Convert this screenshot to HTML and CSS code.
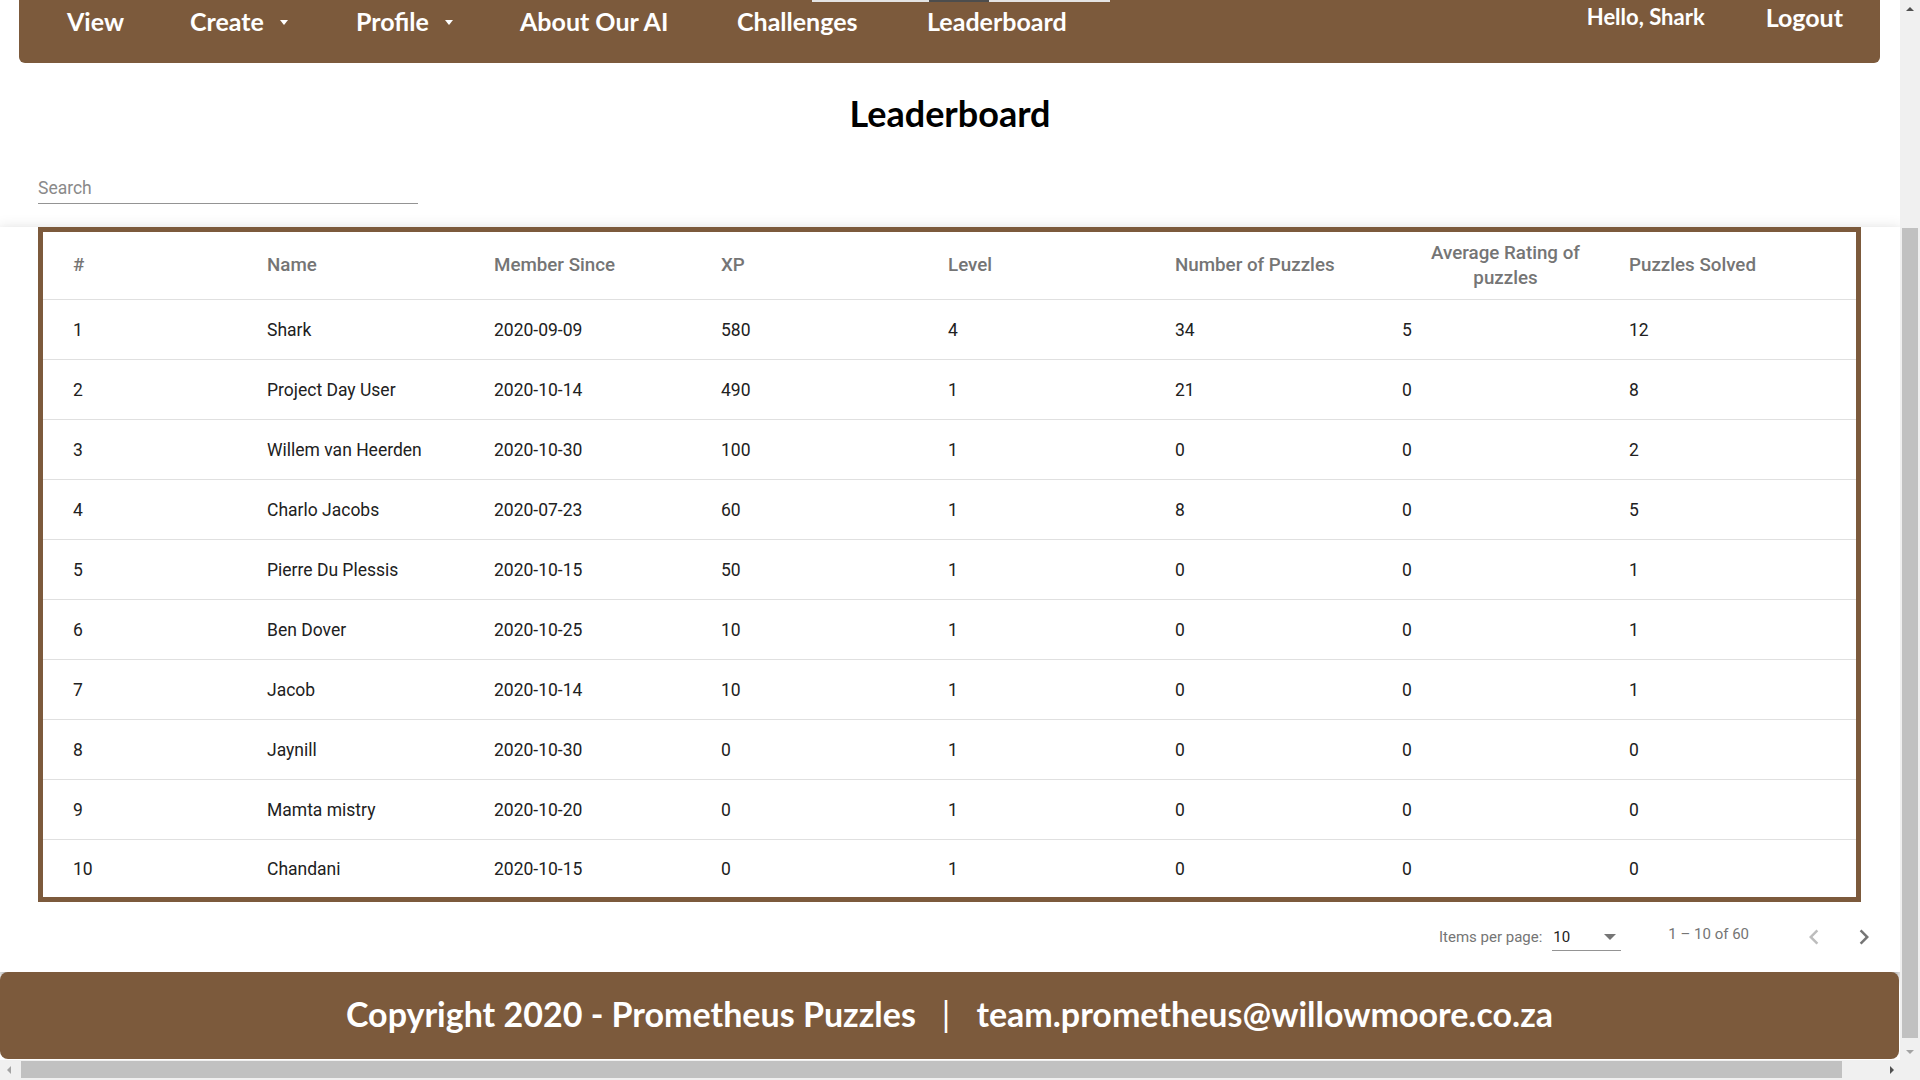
FILE: index.html
```html
<!DOCTYPE html>
<html lang="en">
<head>
<meta charset="utf-8">
<title>Leaderboard - Prometheus Puzzles</title>
<link rel="stylesheet" href="styles.css">
</head>
<body>
<div class="window">
  <div class="viewport">
    <header class="navbar">
      <div class="logo-edge"><span class="logo-dark"></span></div>
      <nav class="nav-left">
        <a class="nav-link w-view">View</a>
        <a class="nav-link w-create">Create<span class="caret"></span></a>
        <a class="nav-link w-profile">Profile<span class="caret"></span></a>
        <a class="nav-link w-about">About Our AI</a>
        <a class="nav-link w-challenges">Challenges</a>
        <a class="nav-link">Leaderboard</a>
      </nav>
      <div class="nav-right">
        <span class="hello">Hello, Shark</span>
        <a class="nav-link">Logout</a>
      </div>
    </header>

    <main class="content">
      <h1 class="page-title">Leaderboard</h1>
      <div class="search-field">
        <input type="text" placeholder="Search">
      </div>

      <section class="board">
        <div class="table-frame">
          <table class="lb-table">
            <colgroup>
              <col class="c-first"><col><col><col><col><col><col><col>
            </colgroup>
            <thead>
              <tr>
                <th>#</th>
                <th>Name</th>
                <th>Member Since</th>
                <th>XP</th>
                <th>Level</th>
                <th>Number of Puzzles</th>
                <th class="th-center">Average Rating of puzzles</th>
                <th>Puzzles Solved</th>
              </tr>
            </thead>
            <tbody>
              <tr><td>1</td><td>Shark</td><td>2020-09-09</td><td>580</td><td>4</td><td>34</td><td>5</td><td>12</td></tr>
              <tr><td>2</td><td>Project Day User</td><td>2020-10-14</td><td>490</td><td>1</td><td>21</td><td>0</td><td>8</td></tr>
              <tr><td>3</td><td>Willem van Heerden</td><td>2020-10-30</td><td>100</td><td>1</td><td>0</td><td>0</td><td>2</td></tr>
              <tr><td>4</td><td>Charlo Jacobs</td><td>2020-07-23</td><td>60</td><td>1</td><td>8</td><td>0</td><td>5</td></tr>
              <tr><td>5</td><td>Pierre Du Plessis</td><td>2020-10-15</td><td>50</td><td>1</td><td>0</td><td>0</td><td>1</td></tr>
              <tr><td>6</td><td>Ben Dover</td><td>2020-10-25</td><td>10</td><td>1</td><td>0</td><td>0</td><td>1</td></tr>
              <tr><td>7</td><td>Jacob</td><td>2020-10-14</td><td>10</td><td>1</td><td>0</td><td>0</td><td>1</td></tr>
              <tr><td>8</td><td>Jaynill</td><td>2020-10-30</td><td>0</td><td>1</td><td>0</td><td>0</td><td>0</td></tr>
              <tr><td>9</td><td>Mamta mistry</td><td>2020-10-20</td><td>0</td><td>1</td><td>0</td><td>0</td><td>0</td></tr>
              <tr><td>10</td><td>Chandani</td><td>2020-10-15</td><td>0</td><td>1</td><td>0</td><td>0</td><td>0</td></tr>
            </tbody>
          </table>
        </div>

        <div class="paginator">
          <span class="page-size-label">Items per page:</span>
          <div class="page-select"><span>10</span><span class="select-arrow"></span></div>
          <span class="range-label">1 – 10 of 60</span>
          <button class="page-btn prev" type="button" aria-label="Previous page">
            <svg viewBox="0 0 24 24"><path fill="currentColor" d="M15.41 7.41L14 6l-6 6 6 6 1.41-1.41L10.83 12z"/></svg>
          </button>
          <button class="page-btn next" type="button" aria-label="Next page">
            <svg viewBox="0 0 24 24"><path fill="currentColor" d="M10 6L8.59 7.41 13.17 12l-4.58 4.59L10 18l6-6z"/></svg>
          </button>
        </div>
      </section>
    </main>

    <footer class="site-footer">
      <span>Copyright 2020 - Prometheus Puzzles</span><span class="sep">|</span><span>team.prometheus@willowmoore.co.za</span>
    </footer>
  </div>

  <div class="vscroll">
    <div class="sb-btn"><span class="arr-up"></span></div>
    <div class="v-track"><div class="v-thumb"></div></div>
    <div class="sb-btn"><span class="arr-down"></span></div>
  </div>
  <div class="hscroll">
    <div class="sb-btn h"><span class="arr-left"></span></div>
    <div class="h-track"><div class="h-thumb"></div></div>
    <div class="sb-btn h"><span class="arr-right"></span></div>
  </div>
  <div class="corner"></div>
</div>
</body>
</html>
```

FILE: styles.css
```css
* { box-sizing: border-box; }
html, body { margin: 0; padding: 0; }
body {
  width: 1920px;
  height: 1080px;
  overflow: hidden;
  background: #fff;
  font-family: Roboto, "Liberation Sans", sans-serif;
}

.window {
  display: grid;
  grid-template-columns: 1900px 20px;
  grid-template-rows: 1060px 20px;
  width: 1920px;
  height: 1080px;
}

.viewport {
  overflow: hidden;
  background: #fff;
  display: flex;
  flex-direction: column;
}

/* ---------- navbar ---------- */
.navbar {
  position: relative;
  flex: none;
  height: 63px;
  margin: 0 20px 0 19px;
  background: #7c5a3c;
  border-radius: 0 0 6px 6px;
  display: flex;
  justify-content: space-between;
  align-items: flex-start;
  color: #fff;
  font-family: Lato, "Open Sans", sans-serif;
  font-weight: 700;
}
.logo-edge {
  position: absolute;
  top: 0;
  left: 793px;
  width: 298px;
  height: 2px;
  background: #e4e4e4;
}
.logo-dark {
  position: absolute;
  top: 0;
  left: 117px;
  width: 60px;
  height: 2px;
  background: #4d4d4d;
}
.nav-left {
  display: flex;
  align-items: flex-start;
  padding: 6px 0 0 48px;
}
.nav-link {
  font-size: 25px;
  line-height: 30px;
  height: 30px;
  color: #fff;
  text-decoration: none;
  display: flex;
  align-items: center;
  white-space: nowrap;
}
.w-view { width: 123px; }
.w-create { width: 166px; }
.w-profile { width: 164px; }
.w-about { width: 217px; }
.w-challenges { width: 190px; }
.caret {
  width: 0;
  height: 0;
  border-left: 4.5px solid transparent;
  border-right: 4.5px solid transparent;
  border-top: 5px solid #fff;
  margin: 2px 0 0 16px;
}
.nav-right {
  display: flex;
  align-items: center;
  gap: 61px;
  height: 32px;
  padding: 2px 37px 0 0;
}
.hello { font-size: 22px; line-height: 30px; }

/* ---------- content ---------- */
.content { flex: none; }
.page-title {
  margin: 28px 0 0;
  text-align: center;
  font-family: Lato, "Open Sans", sans-serif;
  font-weight: 700;
  font-size: 36px;
  line-height: 44px;
  color: #000;
}
.search-field {
  margin: 40px 0 0 38px;
  width: 380px;
}
.search-field input {
  display: block;
  width: 100%;
  height: 29px;
  border: 0;
  border-bottom: 1px solid #949494;
  padding: 1px 0 3px;
  font-family: Roboto, "Liberation Sans", sans-serif;
  font-size: 17.5px;
  line-height: 24px;
  color: #212121;
  background: transparent;
  outline: none;
}
.search-field input::placeholder { color: #8a8a8a; }

.board {
  margin-top: 23px;
  background: #fff;
  box-shadow: 0 5px 5px -3px rgba(0,0,0,.2), 0 8px 10px 1px rgba(0,0,0,.14), 0 3px 14px 2px rgba(0,0,0,.12);
}
.table-frame {
  margin: 0 39px 0 38px;
  border: 5px solid #7c5a3c;
}
.lb-table {
  width: 100%;
  table-layout: fixed;
  border-collapse: separate;
  border-spacing: 0;
  font-family: Roboto, "Liberation Sans", sans-serif;
}
.c-first { width: 224px; }
.lb-table th,
.lb-table td {
  text-align: left;
  padding: 0 20px 0 0;
  border-bottom: 1px solid #e0e0e0;
  vertical-align: middle;
}
.lb-table th:first-child,
.lb-table td:first-child { padding-left: 30px; }
.lb-table th {
  height: 68px;
  font-size: 18.75px;
  font-weight: 500;
  line-height: 25px;
  color: #757575;
}
.lb-table th.th-center { text-align: center; }
.lb-table td {
  height: 60px;
  font-size: 17.5px;
  color: #212121;
}
.lb-table tbody tr:last-child td {
  border-bottom: 0;
  height: 57px;
}

.paginator {
  height: 70px;
  display: flex;
  align-items: center;
  justify-content: flex-end;
  padding-right: 11px;
  font-family: Roboto, "Liberation Sans", sans-serif;
  font-size: 15px;
  color: #757575;
}
.page-size-label { margin-right: 10px; }
.page-select {
  width: 69px;
  height: 28px;
  border-bottom: 1px solid #949494;
  display: flex;
  align-items: center;
  justify-content: space-between;
  padding: 0 5px 0 1px;
  color: #212121;
}
.select-arrow {
  width: 0;
  height: 0;
  border-left: 6px solid transparent;
  border-right: 6px solid transparent;
  border-top: 6px solid #757575;
}
.range-label {
  margin: 0 40px 0 47px;
  padding-bottom: 6px;
}
.page-btn {
  width: 50px;
  height: 50px;
  display: flex;
  align-items: center;
  justify-content: center;
  background: none;
  border: 0;
  padding: 0;
}
.page-btn svg { width: 30px; height: 30px; display: block; }
.page-btn.prev { color: #bdbdbd; }
.page-btn.next { color: #757575; }

/* ---------- footer ---------- */
.site-footer {
  flex: none;
  height: 87px;
  margin-right: 1px;
  background: #7c5a3c;
  border-radius: 8px;
  display: flex;
  align-items: center;
  justify-content: center;
  color: #fff;
  font-family: Lato, "Open Sans", sans-serif;
  font-weight: 700;
  font-size: 34px;
  line-height: 40px;
  padding-bottom: 3px;
  white-space: nowrap;
}
.sep { margin: 0 26px; font-weight: 400; }

/* ---------- emulated scrollbars ---------- */
.vscroll {
  background: #f0f0f0;
  display: flex;
  flex-direction: column;
}
.sb-btn {
  flex: none;
  height: 17px;
  display: flex;
  align-items: center;
  justify-content: center;
}
.sb-btn.h { width: 17px; height: 20px; }
.v-track { flex: 1; }
.v-thumb {
  margin: 211px 0 0 2px;
  width: 16px;
  height: 810px;
  background: #c1c1c1;
}
.arr-up, .arr-down, .arr-left, .arr-right { width: 0; height: 0; }
.arr-up {
  border-left: 4px solid transparent;
  border-right: 4px solid transparent;
  border-bottom: 4px solid #505050;
}
.arr-down {
  border-left: 4px solid transparent;
  border-right: 4px solid transparent;
  border-top: 4px solid #a3a3a3;
}
.hscroll {
  background: #f0f0f0;
  display: flex;
}
.h-track { flex: 1; }
.h-thumb {
  margin: 1px 0 0 4px;
  width: 1821px;
  height: 17px;
  background: #c1c1c1;
}
.arr-left {
  border-top: 4px solid transparent;
  border-bottom: 4px solid transparent;
  border-right: 4px solid #a3a3a3;
}
.arr-right {
  border-top: 4px solid transparent;
  border-bottom: 4px solid transparent;
  border-left: 4px solid #505050;
}
.corner { background: #f0f0f0; }
```
